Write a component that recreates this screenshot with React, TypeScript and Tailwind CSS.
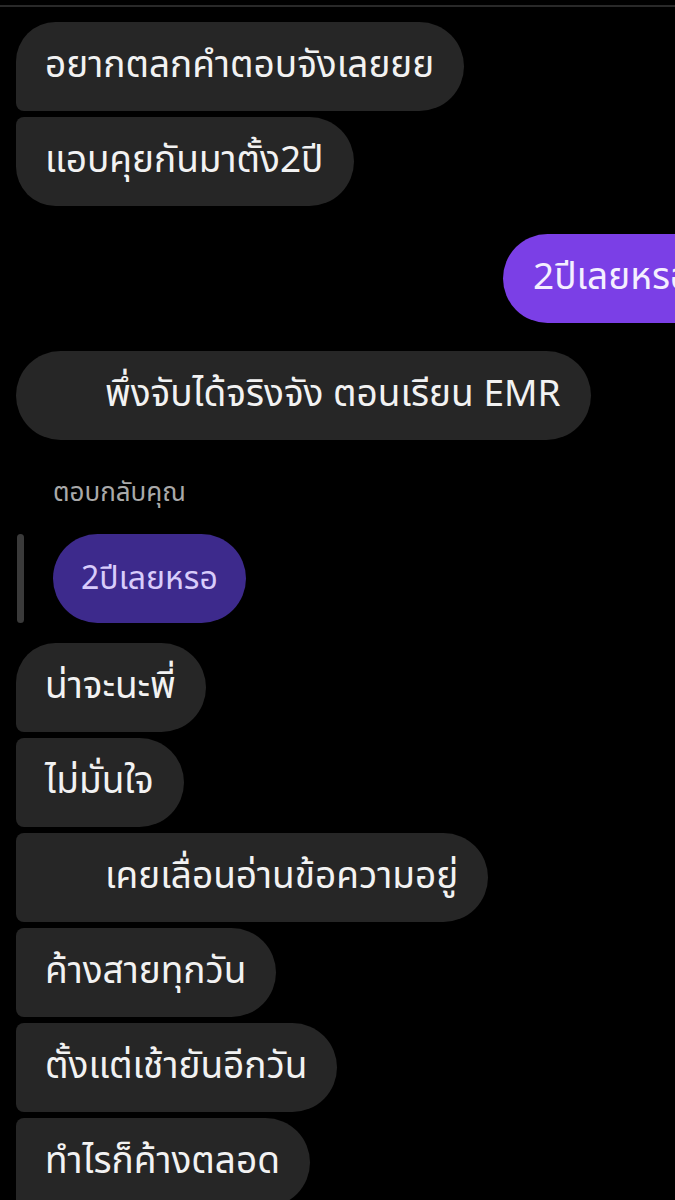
import React from 'react';

type Msg = {
  text: string;
  indent?: boolean;
  corners: string;
};

const thaiFont = { fontFamily: '"Noto Sans Thai", "Noto Sans", Roboto, sans-serif' };

function Bubble({ text, indent, corners }: Msg) {
  return (
    <div
      className={`flex h-[89px] items-center self-start bg-[#262626] text-[37px] text-[#f2f2f2] ${
        indent ? 'pl-[89px]' : 'pl-[29px]'
      } pr-[30px] ${corners}`}
    >
      <span className="whitespace-nowrap leading-none">{text}</span>
    </div>
  );
}

export default function App() {
  return (
    <div className="h-[1200px] w-[675px] overflow-hidden bg-black" style={thaiFont}>
      <div className="mt-[5px] h-[2px] w-full bg-[#292929]" />

      <div className="flex flex-col gap-[6px] pl-4 pt-[15px]">
        <Bubble text="อยากตลกคำตอบจังเลยยย" corners="rounded-r-[45px] rounded-tl-[40px] rounded-bl-[8px]" />
        <Bubble text="แอบคุยกันมาตั้ง2ปี" corners="rounded-r-[45px] rounded-tl-[8px] rounded-bl-[40px]" />
      </div>

      {/* outgoing */}
      <div className="mt-[28px] flex">
        <div className="ml-[503px] flex h-[89px] shrink-0 items-center rounded-[45px] bg-[#7b3fe6] pl-[30px] pr-[40px] text-[37px] text-[#f4efff]">
          <span className="whitespace-nowrap leading-none">2ปีเลยหรอ</span>
        </div>
      </div>

      <div className="mt-[28px] flex flex-col pl-4">
        <Bubble text="พึ่งจับได้จริงจัง ตอนเรียน EMR" indent corners="rounded-[45px]" />
      </div>

      {/* reply preview */}
      <div className="mt-[40px] pl-[53px] text-[26px] leading-none text-[#a9a9a9]">ตอบกลับคุณ</div>
      <div className="mt-[28px] flex items-stretch gap-[29px] pl-[17px]">
        <div className="w-[7px] rounded-full bg-[#3a3a3a]" />
        <div className="flex h-[89px] items-center rounded-[45px] bg-[#3d2a8c] px-[28px] text-[32px] text-[#d8ccfb]">
          <span className="whitespace-nowrap leading-none">2ปีเลยหรอ</span>
        </div>
      </div>

      <div className="mt-[20px] flex flex-col gap-[6px] pl-4">
        <Bubble text="น่าจะนะพี่" corners="rounded-r-[45px] rounded-tl-[40px] rounded-bl-[8px]" />
        <Bubble text="ไม่มั่นใจ" corners="rounded-r-[45px] rounded-l-[8px]" />
        <Bubble text="เคยเลื่อนอ่านข้อความอยู่" indent corners="rounded-r-[45px] rounded-l-[8px]" />
        <Bubble text="ค้างสายทุกวัน" corners="rounded-r-[45px] rounded-l-[8px]" />
        <Bubble text="ตั้งแต่เช้ายันอีกวัน" corners="rounded-r-[45px] rounded-l-[8px]" />
        <Bubble text="ทำไรก็ค้างตลอด" corners="rounded-r-[45px] rounded-l-[8px]" />
      </div>
    </div>
  );
}
